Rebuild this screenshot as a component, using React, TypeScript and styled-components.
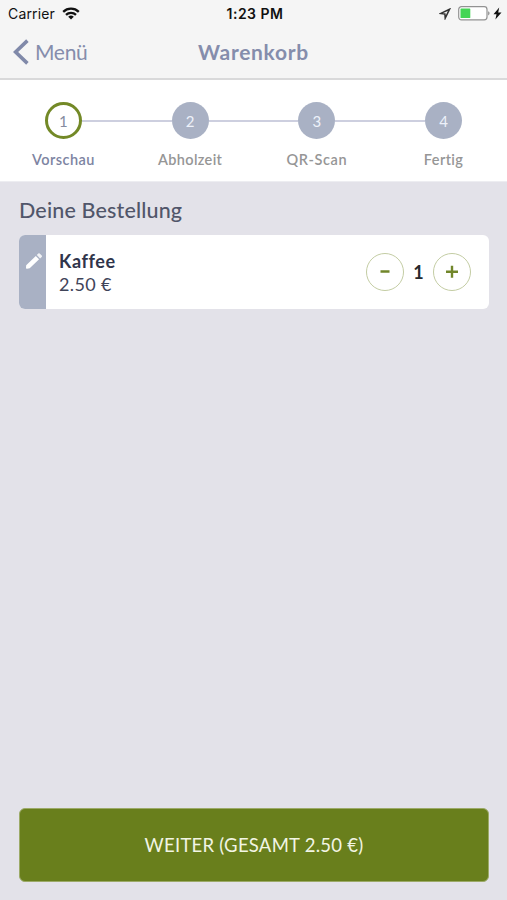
import React from "react";
import styled, { createGlobalStyle } from "styled-components";

const GlobalStyle = createGlobalStyle`
  * { box-sizing: border-box; }
  html, body, #root { height: 100%; }
  body { margin: 0; background: #e3e2e9; font-family: Lato, "Open Sans", sans-serif; }
  button { font-family: inherit; padding: 0; margin: 0; cursor: pointer; }
`;

const Screen = styled.div`
  display: flex;
  flex-direction: column;
  height: 100vh;
  overflow: hidden;
`;

const Header = styled.header`
  flex: none;
  height: 80px;
  background: #f5f5f5;
  border-bottom: 2px solid #d9d9da;
`;

const StatusBar = styled.div`
  display: grid;
  grid-template-columns: 1fr auto 1fr;
  align-items: center;
  height: 27px;
  padding: 0 5px 0 8px;
  color: #111;
  font: 400 14px/27px Inter, sans-serif;
  letter-spacing: 0.15px;
`;

const StatusLeft = styled.div`
  display: flex;
  align-items: center;
  gap: 7px;
`;

const Clock = styled.div`
  font-weight: 600;
  letter-spacing: 0.5px;
`;

const StatusRight = styled.div`
  display: flex;
  align-items: center;
  justify-content: flex-end;
`;

const BatteryGroup = styled.div`
  display: flex;
  align-items: center;
  gap: 2px;
  margin-left: 7px;
`;

const NavBar = styled.nav`
  display: grid;
  grid-template-columns: 1fr auto 1fr;
  align-items: center;
  height: 50px;
  padding: 0 13px;
  color: #858dac;
`;

const BackButton = styled.button`
  display: flex;
  align-items: center;
  gap: 6px;
  border: 0;
  background: none;
  color: inherit;
  font-size: 21px;
  line-height: 28px;
  letter-spacing: -0.3px;
`;

const Title = styled.h1`
  margin: 0;
  font-size: 21px;
  line-height: 28px;
  font-weight: 700;
  letter-spacing: 0.7px;
`;

const Steps = styled.ol`
  flex: none;
  display: grid;
  grid-template-columns: repeat(4, 1fr);
  height: 102px;
  margin: 0;
  padding: 22px 0 0;
  list-style: none;
  background: #fff;
  border-bottom: 1px solid #ededf1;
`;

const Step = styled.li`
  display: flex;
  flex-direction: column;
  align-items: center;
`;

const Track = styled.div`
  display: grid;
  grid-template-columns: 1fr 37px 1fr;
  align-items: center;
  width: 100%;
`;

const Line = styled.span<{ $hidden?: boolean }>`
  height: 2px;
  background: ${(p) => (p.$hidden ? "transparent" : "#cdcfdf")};
`;

const Circle = styled.span<{ $active: boolean }>`
  height: 37px;
  border-radius: 50%;
  border: ${(p) => (p.$active ? "3px solid #738927" : "0")};
  background: ${(p) => (p.$active ? "#fff" : "#a9b1c4")};
  color: ${(p) => (p.$active ? "#858b9f" : "#edf1fa")};
  display: flex;
  align-items: center;
  justify-content: center;
  font-size: 15px;
`;

const StepLabel = styled.span<{ $active: boolean; $spacing: number }>`
  margin-top: 11px;
  font-size: 14.5px;
  line-height: 20px;
  font-weight: 600;
  letter-spacing: ${(p) => p.$spacing}px;
  color: ${(p) => (p.$active ? "#7d84a2" : "#969696")};
`;

const Content = styled.main`
  flex: 1;
  padding: 14px 18px 0 19px;
`;

const SectionTitle = styled.h2`
  margin: 0 0 11px;
  font-size: 21.5px;
  line-height: 28px;
  font-weight: 500;
  letter-spacing: 0.15px;
  color: #51566a;
`;

const OrderRow = styled.article`
  display: flex;
  height: 74px;
  border-radius: 6px;
  overflow: hidden;
  background: #fff;
`;

const EditHandle = styled.button`
  width: 27px;
  flex: none;
  display: flex;
  justify-content: center;
  padding: 17px 0 0 2px;
  border: 0;
  background: #a9b1c4;
`;

const Product = styled.div`
  flex: 1;
  padding: 15px 0 0 13px;
  font-size: 18px;
  line-height: 23px;
  color: #3f4459;
`;

const ProductName = styled.div`
  font-weight: 700;
  letter-spacing: 0.6px;
  color: #30354b;
`;

const Price = styled.div`
  letter-spacing: 0.35px;
`;

const Quantity = styled.div`
  display: flex;
  align-items: center;
  padding-right: 18px;
`;

const RoundButton = styled.button`
  display: grid;
  place-items: center;
  width: 38px;
  height: 38px;
  border: 1px solid #c3cca3;
  border-radius: 50%;
  background: #fff;
`;

const Count = styled.span`
  width: 29px;
  text-align: center;
  font-size: 18px;
  font-weight: 700;
  color: #27282c;
`;

const Footer = styled.footer`
  flex: none;
  padding: 0 18px 18px 19px;
`;

const NextButton = styled.button`
  display: block;
  width: 100%;
  height: 74px;
  border: 1px solid #9caa68;
  border-radius: 6px;
  background: #697f1c;
  color: #f2f5e4;
  font-size: 18.5px;
  letter-spacing: 0.25px;
`;

const steps = [
  { label: "Vorschau", spacing: 0.45 },
  { label: "Abholzeit", spacing: 0.35 },
  { label: "QR-Scan", spacing: 0.6 },
  { label: "Fertig", spacing: 0.4 },
];

const WifiIcon = () => (
  <svg width="18" height="13" viewBox="0 0 18 13" fill="none" stroke="#111" strokeWidth="2.3">
    <path d="M1.2 4.8C5.6.6 12.4.6 16.8 4.8" />
    <path d="M4 7.8c2.8-2.7 7.2-2.7 10 0" />
    <path d="M9 12.6 6.2 9.8a4 4 0 0 1 5.6 0Z" fill="#111" stroke="none" />
  </svg>
);

const LocationIcon = () => (
  <svg width="12" height="12" viewBox="0 0 12 12" fill="none" stroke="#333" strokeWidth="1.5">
    <path d="M10.6 1.2 1.8 5.4l4.1.6.3 4.2Z" />
  </svg>
);

const BatteryIcon = () => (
  <svg width="33" height="15" viewBox="0 0 33 15">
    <rect x="0.7" y="0.7" width="28.3" height="13.2" rx="2.8" fill="#fff" stroke="#929292" strokeWidth="1.2" />
    <rect x="2.5" y="2.5" width="9.8" height="9.6" rx="0.6" fill="#43d554" />
    <path d="M30.2 5.2c1.8.6 1.8 3.6 0 4.2Z" fill="#888" />
  </svg>
);

const BoltIcon = () => (
  <svg width="9" height="13" viewBox="0 0 9 13">
    <path d="M6.2.5.5 7.2h3L2.4 12.4 8.5 5.5H5.2Z" fill="#111" />
  </svg>
);

const BackIcon = () => (
  <svg width="16" height="26" viewBox="0 0 16 26" fill="none" stroke="#8089a9" strokeWidth="3.6">
    <path d="M14.4 1.6 2.6 13l11.8 11.4" />
  </svg>
);

const PencilIcon = () => (
  <svg width="18" height="18" viewBox="0 0 18 18" fill="#fff">
    <path d="M1.2 13.2 10.8 4l3.3 3.3-9.4 9-2.7.5a.9.9 0 0 1-1-1Z" />
    <path d="m11.8 3 1.5-1.4a1 1 0 0 1 1.4 0l2 2a1 1 0 0 1 0 1.4l-1.6 1.4Z" opacity="0.85" />
  </svg>
);

export default function App() {
  return (
    <>
      <GlobalStyle />
      <Screen>
        <Header>
          <StatusBar>
            <StatusLeft>
              <span>Carrier</span>
              <WifiIcon />
            </StatusLeft>
            <Clock>1:23 PM</Clock>
            <StatusRight>
              <LocationIcon />
              <BatteryGroup>
                <BatteryIcon />
                <BoltIcon />
              </BatteryGroup>
            </StatusRight>
          </StatusBar>
          <NavBar>
            <BackButton>
              <BackIcon />
              Menü
            </BackButton>
            <Title>Warenkorb</Title>
          </NavBar>
        </Header>
        <Steps>
          {steps.map((step, i) => (
            <Step key={step.label}>
              <Track>
                <Line $hidden={i === 0} />
                <Circle $active={i === 0}>{i + 1}</Circle>
                <Line $hidden={i === steps.length - 1} />
              </Track>
              <StepLabel $active={i === 0} $spacing={step.spacing}>
                {step.label}
              </StepLabel>
            </Step>
          ))}
        </Steps>
        <Content>
          <SectionTitle>Deine Bestellung</SectionTitle>
          <OrderRow>
            <EditHandle aria-label="Bearbeiten">
              <PencilIcon />
            </EditHandle>
            <Product>
              <ProductName>Kaffee</ProductName>
              <Price>2.50 €</Price>
            </Product>
            <Quantity>
              <RoundButton aria-label="Weniger">
                <svg width="14" height="14" viewBox="0 0 14 14" stroke="#71862a" strokeWidth="2.4">
                  <path d="M2.5 6.5h9" />
                </svg>
              </RoundButton>
              <Count>1</Count>
              <RoundButton aria-label="Mehr">
                <svg width="14" height="14" viewBox="0 0 14 14" stroke="#71862a" strokeWidth="2.4">
                  <path d="M1 6.7h12M7 .7v12" />
                </svg>
              </RoundButton>
            </Quantity>
          </OrderRow>
        </Content>
        <Footer>
          <NextButton>WEITER (GESAMT 2.50 €)</NextButton>
        </Footer>
      </Screen>
    </>
  );
}
